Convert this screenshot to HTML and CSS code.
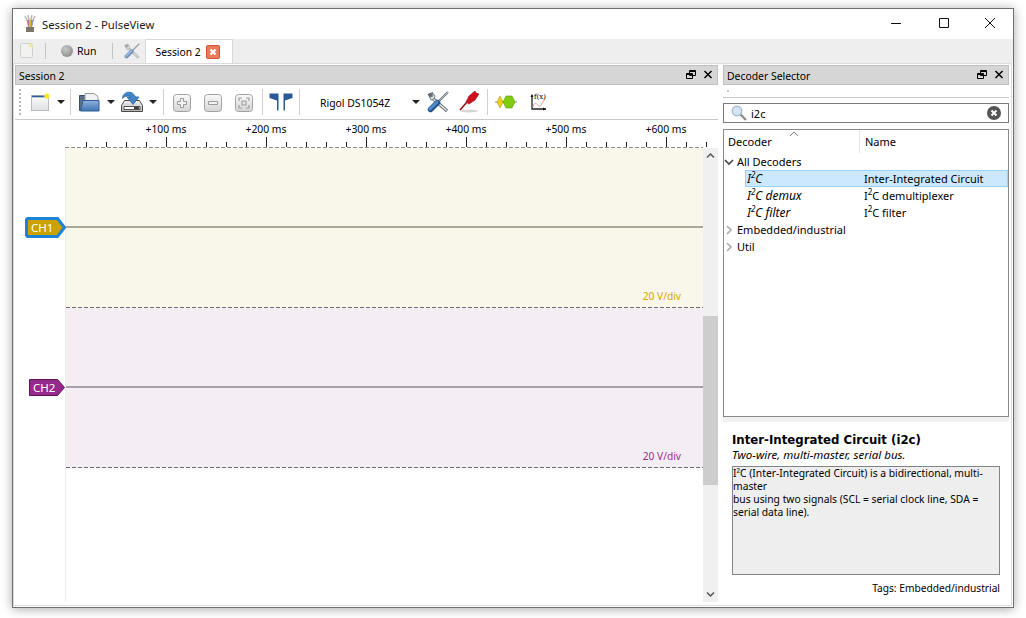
FILE: index.html
```html
<!DOCTYPE html>
<html lang="en">
<head>
  <meta charset="UTF-8" />
  <title>Session 2 - PulseView</title>
  <link rel="stylesheet" href="styles.css">
</head>
<body>
  <div class="window">
    <header class="titlebar">
      <svg class="app-icon" width="16" height="18" viewBox="0 0 16 18">
        <path d="M3 1l3 6M6 0l1.500 7M10 0L8.500 7M13 1l-3 6" stroke="#b9b0a8" stroke-width="1.400" fill="none"/>
        <path d="M4.500 5h7L10 12H6z" fill="#c9789a"/>
        <path d="M7 5h2v7H7z" fill="#e0b040"/>
        <path d="M9 5h2.500L10 12H9z" fill="#7d9ac8"/>
        <path d="M4 12h8v5H4z" fill="#7d7668"/>
      </svg>
      <span class="title-text">Session 2 - PulseView</span>
      <div class="win-buttons">
        <svg width="46" height="30" viewBox="0 0 46 30"><path d="M16 14.500h10" stroke="#111"/></svg>
        <svg width="46" height="30" viewBox="0 0 46 30"><path d="M18.500 9.500h9v9h-9z" fill="none" stroke="#111"/></svg>
        <svg width="46" height="30" viewBox="0 0 46 30"><path d="M18 9l10 10M28 9L18 19" fill="none" stroke="#111"/></svg>
      </div>
    </header>

    <nav class="tabbar">
      <svg class="tb-new" width="14" height="16" viewBox="0 0 14 16">
        <rect x="0.500" y="0.500" width="12" height="14" rx="1" fill="#f2f2f0" stroke="#cfcfcf"/>
        <circle cx="11" cy="2.500" r="2" fill="#f3ea9a"/>
      </svg>
      <span class="tb-sep"></span>
      <span class="run-dot"></span>
      <span class="run-text">Run</span>
      <span class="tb-sep tb-sep-2"></span>
      <svg class="tb-tools" width="16" height="16" viewBox="0 0 22 22">
        <path d="M3 2l1 4 2 1.500L20 20" stroke="#9a9fa3" stroke-width="3.200" fill="none"/>
        <path d="M4 6L19.500 19.500" stroke="#eceff1" stroke-width="1.400"/>
        <path d="M1 3l2 3 3-1-1-4 3 4-1 3-3 1z" fill="#e6e8e9" stroke="#9a9fa3" stroke-width="0.800"/>
        <path d="M21 1l-9 9" stroke="#9aa2a8" stroke-width="2"/>
        <path d="M10.500 11.500l-7 7" stroke="#6b8bb0" stroke-width="5.400" stroke-linecap="round"/>
        <path d="M10 11l-7 7" stroke="#93b6da" stroke-width="3" stroke-linecap="round"/>
      </svg>
      <div class="tab">
        <span>Session 2</span>
        <svg width="14" height="14" viewBox="0 0 14 14">
          <rect x="0.500" y="0.500" width="13" height="13" rx="1" fill="#ea7a58" stroke="#d8502f"/>
          <path d="M4.500 4.500l5 5M9.500 4.500l-5 5" stroke="#fff" stroke-width="2.200"/>
        </svg>
      </div>
    </nav>

    <main class="docks">
      <section class="session-dock">
        <div class="dock-head">
          <span>Session 2</span>
          <svg class="dock-btn" width="28" height="10" viewBox="0 0 28 10">
            <path d="M3.500 0.500h6v5h-6zM3.500 1.500h6M0.500 3.500h6v5h-6zM0.500 4.500h6" fill="#d6d6d6" stroke="#000"/>
            <path d="M18.500 1l7 7M25.500 1l-7 7" stroke="#000" stroke-width="1.500"/>
          </svg>
        </div>

        <div class="toolbar">
          <span class="grip"></span>
          <svg class="ic-new" width="20" height="20" viewBox="0 0 20 20">
            <defs>
              <linearGradient id="paper" x1="0" y1="0" x2="0" y2="1"><stop offset="0" stop-color="#fbfbfb"/><stop offset="1" stop-color="#dfe3e3"/></linearGradient>
              <radialGradient id="glow"><stop offset="0.400" stop-color="#f7e81c"/><stop offset="1" stop-color="#fff7a0" stop-opacity="0"/></radialGradient>
            </defs>
            <rect x="0.500" y="3.500" width="17" height="15" fill="url(#paper)" stroke="#b9bdbd"/>
            <path d="M1 4.500h15" stroke="#2c5c98" stroke-width="1.600"/>
            <circle cx="16" cy="4" r="4" fill="url(#glow)"/>
          </svg>
          <span class="caret c-1"></span>
          <span class="sep s-1"></span>
          <svg class="ic-open" width="21" height="20" viewBox="0 0 21 20">
            <defs>
              <linearGradient id="folder" x1="0" y1="0" x2="0" y2="1"><stop offset="0" stop-color="#8fb2dc"/><stop offset="1" stop-color="#3f74b4"/></linearGradient>
            </defs>
            <path d="M0.500 3.500h7l1 2h3v13h-11z" fill="#5b7088" stroke="#3d4e60"/>
            <path d="M6 1.500h9l4 3v10H6z" fill="#f2f2f2" stroke="#9a9a9a"/>
            <path d="M4 8.500h16v10.500H1.500z" fill="url(#folder)" stroke="#2f5c94"/>
          </svg>
          <span class="caret c-2"></span>
          <svg class="ic-save" width="22" height="22" viewBox="0 0 22 22">
            <defs>
              <linearGradient id="drive" x1="0" y1="0" x2="0" y2="1"><stop offset="0" stop-color="#f2f2f2"/><stop offset="1" stop-color="#b4b4b4"/></linearGradient>
            </defs>
            <path d="M3.500 9.500h15l3 5v6h-21v-6z" fill="url(#drive)" stroke="#4a4a4a"/>
            <path d="M3 15.500h16v3H3z" fill="#fff" stroke="#555"/>
            <path d="M13 16h5v2h-5z" fill="#3f3f3f"/>
            <path d="M1.500 7.500C1.500 1 11-2 14.500 6H18l-6 7.500L6 6h3.500C8 4.500 4 4.500 1.500 7.500z" fill="#3f86c8" stroke="#2a5f98" stroke-width="0.800"/>
          </svg>
          <span class="caret c-3"></span>
          <span class="sep s-2"></span>
          <svg class="ic-zoom z-1" width="18" height="18" viewBox="0 0 18 18">
            <defs>
              <linearGradient id="btn" x1="0" y1="0" x2="0" y2="1"><stop offset="0" stop-color="#fafafa"/><stop offset="1" stop-color="#d4d4d4"/></linearGradient>
            </defs>
            <rect x="0.500" y="0.500" width="17" height="17" rx="3" fill="url(#btn)" stroke="#a2a2a2"/>
            <path d="M7.500 4.500h3v3h3v3h-3v3h-3v-3h-3v-3h3z" fill="#f4f4f4" stroke="#9a9a9a"/>
          </svg>
          <svg class="ic-zoom z-2" width="18" height="18" viewBox="0 0 18 18">
            <rect x="0.500" y="0.500" width="17" height="17" rx="3" fill="url(#btn)" stroke="#a2a2a2"/>
            <path d="M4.500 7.500h9v3h-9z" fill="#f4f4f4" stroke="#9a9a9a"/>
          </svg>
          <svg class="ic-zoom z-2" width="18" height="18" viewBox="0 0 18 18">
            <rect x="0.500" y="0.500" width="17" height="17" rx="3" fill="url(#btn)" stroke="#a2a2a2"/>
            <path d="M4 7V4h3M11 4h3v3M14 11v3h-3M7 14H4v-3M7 7h4v4H7z" fill="none" stroke="#a0a0a0" stroke-width="1.200"/>
          </svg>
          <span class="sep s-3"></span>
          <svg class="ic-cursors" width="24" height="18" viewBox="0 0 24 18">
            <path d="M0.500 0.500h9v17H8V7.500L.5 5z" fill="#2a5a98"/>
            <path d="M23.500 0.500h-9v17H16V7.500L23.500 5z" fill="#2a5a98"/>
          </svg>
          <span class="sep s-4"></span>
          <span class="device">Rigol DS1054Z</span>
          <span class="caret c-4"></span>
          <svg class="ic-tools" width="22" height="22" viewBox="0 0 22 22">
            <path d="M3 2l1 4 2 1.500L20 20" stroke="#5f6a72" stroke-width="3.200" fill="none"/>
            <path d="M4 6L19.500 19.500" stroke="#eceff1" stroke-width="1.400"/>
            <path d="M1 3l2 3 3-1-1-4 3 4-1 3-3 1z" fill="#dfe2e4" stroke="#5f6a72" stroke-width="0.800"/>
            <path d="M21 1l-9 9" stroke="#5b6670" stroke-width="2"/>
            <path d="M21 1l-9 9" stroke="#d9dde0" stroke-width="0.800"/>
            <path d="M10.500 11.500l-7 7" stroke="#1f4f88" stroke-width="5.400" stroke-linecap="round"/>
            <path d="M10 11l-7 7" stroke="#4f8ccb" stroke-width="3" stroke-linecap="round"/>
          </svg>
          <svg class="ic-probe" width="21" height="22" viewBox="0 0 21 22">
            <ellipse cx="10" cy="20" rx="9" ry="1.500" fill="#d6d6d6"/>
            <path d="M1 19L8 11" stroke="#a01010" stroke-width="1.600"/>
            <path d="M7 11l3-6 6-5 1 2 3 1-4 6-6 4z" fill="#d0101c" stroke="#8a0c12" stroke-width="0.600"/>
          </svg>
          <span class="sep s-5"></span>
          <svg class="ic-decoder" width="22" height="14" viewBox="0 0 22 14">
            <path d="M0 7h22" stroke="#888"/>
            <path d="M5 1l3 6-3 6-3-6z" fill="#f0cf20" stroke="#b49a10" stroke-width="0.600"/>
            <path d="M11 1h6l3 6-3 6h-6l-3-6z" fill="#7ecb10" stroke="#5c9a08" stroke-width="0.600"/>
          </svg>
          <svg class="ic-math" width="18" height="19" viewBox="0 0 18 19">
            <path d="M3 2v14h14" fill="none" stroke="#222" stroke-width="1.300"/>
            <path d="M1.500 4L3 1l1.500 3zM14 14.500l3 1.500-3 1.500z" fill="#111"/>
            <path d="M4 14c2-7 4-2 6-1s4-4 6-9" fill="none" stroke="#ee9a9a"/>
            <text class="math-text" x="5" y="6">f(x)</text>
          </svg>
        </div>

        <div class="ruler-row">
          <svg class="ruler" width="692" height="28" viewBox="0 0 692 28">
            <defs>
              <pattern id="ticks" x="21" y="0" width="20" height="28" patternUnits="userSpaceOnUse">
                <path d="M0.500 22v5" stroke="#222"/>
              </pattern>
              <pattern id="majors" x="1" y="0" width="100" height="28" patternUnits="userSpaceOnUse">
                <path d="M0.500 17v10" stroke="#222"/>
              </pattern>
            </defs>
            <rect x="21" width="621" height="28" fill="url(#ticks)"/>
            <rect x="101" width="541" height="28" fill="url(#majors)"/>
            <path d="M0 27.500h638" stroke="#8c8c8c" stroke-dasharray="4 2"/>
            <text class="tick-label" x="101" y="13">+100 ms</text>
            <text class="tick-label" x="201" y="13">+200 ms</text>
            <text class="tick-label" x="301" y="13">+300 ms</text>
            <text class="tick-label" x="401" y="13">+400 ms</text>
            <text class="tick-label" x="501" y="13">+500 ms</text>
            <text class="tick-label" x="601" y="13">+600 ms</text>
          </svg>
        </div>

        <div class="trace-area">
          <div class="traces">
            <div class="trace">
              <div class="gutter">
                <svg width="41" height="21" viewBox="0 0 41 21">
                  <path d="M2.500 1.500h30l7 9-7 9h-30l-1-1v-16z" fill="#c9a200" stroke="#1c84d8" stroke-width="3"/>
                  <text class="ch-label" x="6" y="14.500">CH1</text>
                </svg>
              </div>
              <div class="band band-1">
                <span class="sig-line"></span>
                <span class="vdiv">20 V/div</span>
              </div>
            </div>
            <div class="trace">
              <div class="gutter">
                <svg width="37" height="17" viewBox="0 0 37 17">
                  <path d="M0.500 0.500h28l7 8-7 8h-28z" fill="#952a8c" stroke="#5e1258"/>
                  <text class="ch-label" x="4" y="12.500">CH2</text>
                </svg>
              </div>
              <div class="band band-2">
                <span class="sig-line"></span>
                <span class="vdiv">20 V/div</span>
              </div>
            </div>
            <div class="trace-rest"><div class="gutter"></div></div>
          </div>
          <div class="scrollbar">
            <svg width="15" height="16" viewBox="0 0 15 16"><path d="M4 9.500l3.500-3.500 3.500 3.500" fill="none" stroke="#555" stroke-width="1.500"/></svg>
            <div class="scroll-track"><div class="scroll-thumb"></div></div>
            <svg width="15" height="16" viewBox="0 0 15 16"><path d="M4 6.500L7.500 10 11 6.500" fill="none" stroke="#555" stroke-width="1.500"/></svg>
          </div>
        </div>
      </section>

      <aside class="decoder-dock">
        <div class="dock-head">
          <span>Decoder Selector</span>
          <svg class="dock-btn" width="28" height="10" viewBox="0 0 28 10">
            <path d="M3.500 0.500h6v5h-6zM3.500 1.500h6M0.500 3.500h6v5h-6zM0.500 4.500h6" fill="#d6d6d6" stroke="#000"/>
            <path d="M18.500 1l7 7M25.500 1l-7 7" stroke="#000" stroke-width="1.500"/>
          </svg>
        </div>
        <div class="search-strip"><span class="strip-dot"></span></div>
        <div class="search">
          <svg width="16" height="16" viewBox="0 0 16 16">
            <path d="M9 9l6 6" stroke="#8a8a8a" stroke-width="2.200"/>
            <circle cx="6" cy="6" r="4.800" fill="#d4e6f6" stroke="#a4b8ca" stroke-width="1.300"/>
          </svg>
          <span class="search-text">i2c</span>
          <svg class="search-clear" width="14" height="14" viewBox="0 0 14 14">
            <circle cx="7" cy="7" r="7" fill="#555"/>
            <path d="M4.500 4.500l5 5M9.500 4.500l-5 5" stroke="#fff" stroke-width="2"/>
          </svg>
        </div>

        <div class="tree">
          <div class="tree-head">
            <span class="th-name">Decoder</span>
            <span class="th-desc">Name</span>
            <svg class="sort" width="10" height="5" viewBox="0 0 10 5"><path d="M1 5l4-4 4 4" fill="none" stroke="#888"/></svg>
          </div>
          <div class="row">
            <svg class="arrow" width="10" height="10" viewBox="0 0 10 10"><path d="M1 3l4 4 4-4" fill="none" stroke="#444" stroke-width="1.600"/></svg>
            <span>All Decoders</span>
          </div>
          <div class="row child selected">
            <span class="cell-name"><i>I<sup>2</sup>C</i></span>
            <span>Inter-Integrated Circuit</span>
          </div>
          <div class="row child">
            <span class="cell-name"><i>I<sup>2</sup>C demux</i></span>
            <span>I<sup>2</sup>C demultiplexer</span>
          </div>
          <div class="row child">
            <span class="cell-name"><i>I<sup>2</sup>C filter</i></span>
            <span>I<sup>2</sup>C filter</span>
          </div>
          <div class="row">
            <svg class="arrow" width="10" height="10" viewBox="0 0 10 10"><path d="M3 1l4 4-4 4" fill="none" stroke="#aaa" stroke-width="1.600"/></svg>
            <span>Embedded/industrial</span>
          </div>
          <div class="row">
            <svg class="arrow" width="10" height="10" viewBox="0 0 10 10"><path d="M3 1l4 4-4 4" fill="none" stroke="#aaa" stroke-width="1.600"/></svg>
            <span>Util</span>
          </div>
        </div>

        <div class="splitter"></div>
        <div class="details">
          <h2>Inter-Integrated Circuit (i2c)</h2>
          <p class="brief">Two-wire, multi-master, serial bus.</p>
          <p class="desc">I²C (Inter-Integrated Circuit) is a bidirectional, multi-master<br>bus using two signals (SCL = serial clock line, SDA = serial data line).</p>
          <p class="tags">Tags: Embedded/industrial</p>
        </div>
      </aside>
    </main>
  </div>
</body>
</html>
```

FILE: styles.css
```css
* {
  margin: 0;
  padding: 0;
  box-sizing: border-box;
}

html, body {
  height: 100%;
  overflow: hidden;
}

body {
  background: #fff;
  padding: 8px 12px 10px;
  font-family: "Noto Sans", "Open Sans", sans-serif;
  font-size: 11px;
  color: #000;
}

.window {
  width: 1002px;
  height: 600px;
  background: #fff;
  border: 1px solid #6f6f6f;
  box-shadow: 0 1px 10px rgba(0, 0, 0, 0.35);
  display: flex;
  flex-direction: column;
}

.titlebar {
  height: 30px;
  display: flex;
  align-items: center;
  padding-left: 9px;
}

.app-icon {
  margin-right: 4px;
}

.title-text {
  font-size: 11.300px;
  color: #1a1a1a;
}

.win-buttons {
  margin-left: auto;
  display: flex;
}

.tabbar {
  height: 24px;
  background: #eeeeee;
  display: flex;
  align-items: center;
  padding-left: 7px;
}

.tb-sep {
  width: 1px;
  height: 16px;
  background: #c4c4c4;
  margin-left: 11px;
}

.tb-sep-2 {
  margin-left: 15px;
}

.run-dot {
  width: 12px;
  height: 12px;
  border-radius: 50%;
  background: radial-gradient(circle at 40% 35%, #c8c8c8, #7e7e7e);
  margin-left: 15px;
}

.run-text {
  margin-left: 4px;
  font-size: 10.500px;
}

.tb-tools {
  margin-left: 11px;
}

.tab {
  align-self: stretch;
  margin-left: 5px;
  width: 88px;
  background: #fff;
  border: 1px solid #d8d8d8;
  border-bottom: none;
  display: flex;
  align-items: center;
  gap: 4px;
  padding-left: 10px;
  font-size: 10.300px;
}

.tab svg {
  margin-left: 1px;
}

.docks {
  flex: 1;
  display: flex;
  min-height: 0;
  margin: 0 1px 1px 0;
  padding: 1px 0 3px 1px;
  border: 1px solid #dcdcdc;
}

.session-dock {
  width: 703px;
  display: flex;
  flex-direction: column;
}

.decoder-dock {
  width: 286px;
  margin-left: 5px;
  display: flex;
  flex-direction: column;
}

.dock-head {
  height: 20px;
  flex-shrink: 0;
  background: #d6d6d6;
  border: 1px solid #c0c0c0;
  display: flex;
  align-items: center;
  justify-content: space-between;
  padding: 2px 3px 0;
  font-size: 10.400px;
}

.dock-btn {
  margin-top: -2px;
}

.toolbar {
  height: 35px;
  flex-shrink: 0;
  display: flex;
  align-items: center;
  border-bottom: 1px solid #c8c8c8;
}

.grip {
  width: 2px;
  height: 26px;
  margin-left: 4px;
  background: repeating-linear-gradient(#b8b8b8 0 2px, transparent 2px 4px);
}

.sep {
  width: 1px;
  height: 26px;
  background: #d0d0d0;
}

.caret {
  width: 0;
  height: 0;
  border-left: 4px solid transparent;
  border-right: 4px solid transparent;
  border-top: 4px solid #222;
}

.ic-new { margin-left: 10px; }
.c-1 { margin-left: 6px; }
.s-1 { margin-left: 5px; }
.ic-open { margin-left: 8px; }
.c-2 { margin-left: 7px; }
.ic-save { margin-left: 6px; }
.c-3 { margin-left: 6px; }
.s-2 { margin-left: 6px; }
.z-1 { margin: 1px 0 0 9px; }
.z-2 { margin: 1px 0 0 13px; }
.s-3 { margin-left: 9px; }
.ic-cursors { margin-left: 6px; }
.s-4 { margin-left: 6px; }
.device { margin: 1px 0 0 20px; width: 92px; font-size: 10.400px; }
.ic-tools { margin-left: 7px; }
.ic-probe { margin-left: 10px; }
.s-5 { margin-left: 7px; }
.ic-decoder { margin-left: 7px; }
.ic-math { margin-left: 12px; }

.math-text {
  font-size: 7px;
  font-family: "DejaVu Serif", serif;
}

.ruler-row {
  height: 28px;
  flex-shrink: 0;
  padding-left: 50px;
}

.ruler {
  display: block;
}

.tick-label {
  font-size: 10.300px;
  fill: #000;
  text-anchor: middle;
}

.ch-label {
  font-size: 11.500px;
  fill: #fff;
}

.trace-area {
  flex: 1;
  min-height: 0;
  display: flex;
}

.traces {
  flex: 1;
  display: flex;
  flex-direction: column;
}

.trace {
  height: 160px;
  display: flex;
}

.trace-rest {
  flex: 1;
  display: flex;
}

.gutter {
  width: 51px;
  flex-shrink: 0;
  border-right: 1px solid #ececec;
  display: flex;
  align-items: center;
  justify-content: flex-end;
}

.trace .gutter svg {
  margin: 0 -1px 2px 0;
}

.band {
  flex: 1;
  display: grid;
  grid-template-rows: 78px 2px 1fr;
  padding-bottom: 1px;
  background-repeat: no-repeat;
  background-position: bottom;
  background-size: 100% 1px;
  background-image: repeating-linear-gradient(90deg, #6e6e6e 0 4px, transparent 4px 6px);
}

.band-1 { background-color: #f9f7ea; }
.band-2 { background-color: #f4eef4; }

.sig-line {
  grid-row: 2;
}

.band-1 .sig-line { background: #aaa797; }
.band-2 .sig-line { background: #ab9fab; }

.vdiv {
  grid-row: 3;
  align-self: end;
  justify-self: end;
  margin: 0 22px 4px 0;
  font-size: 10.200px;
}

.band-1 .vdiv { color: #d2a800; }
.band-2 .vdiv { color: #9a2a92; }

.scrollbar {
  width: 15px;
  flex-shrink: 0;
  background: #f0f0f0;
  display: flex;
  flex-direction: column;
}

.scroll-track {
  flex: 1;
  padding-top: 152px;
}

.scroll-thumb {
  height: 169px;
  background: #cdcdcd;
}

.search-strip {
  height: 13px;
  flex-shrink: 0;
  border-bottom: 1px solid #c8c8c8;
  padding: 5px 0 0 4px;
}

.strip-dot {
  display: block;
  width: 2px;
  height: 2px;
  background: #c4c4c4;
}

.search {
  height: 20px;
  flex-shrink: 0;
  margin-top: 5px;
  border: 1px solid #7a7a7a;
  display: flex;
  align-items: center;
  padding: 0 7px;
  gap: 4px;
}

.search-clear {
  margin-left: auto;
}

.tree {
  height: 288px;
  flex-shrink: 0;
  margin-top: 6px;
  border: 1px solid #868a8e;
  position: relative;
}

.tree-head {
  height: 23px;
  display: flex;
  align-items: center;
  padding-left: 4px;
}

.th-name {
  width: 132px;
  border-right: 1px solid #e5e5e5;
  height: 23px;
  line-height: 23px;
}

.th-desc {
  padding-left: 5px;
}

.sort {
  position: absolute;
  left: 65px;
  top: 1px;
}

.row {
  height: 17px;
  display: flex;
  align-items: center;
}

.row .arrow {
  margin-right: 3px;
}

.row.child {
  margin-left: 21px;
  padding-left: 2px;
}

.row.selected {
  background: #cce8ff;
  border: 1px solid #99d1ff;
  padding-left: 1px;
}

.cell-name {
  width: 117px;
  flex-shrink: 0;
  font-size: 12px;
}

sup {
  font-size: 8px;
  line-height: 0;
}

.splitter {
  height: 5px;
  flex-shrink: 0;
  background: #f0f0f0;
}

.details {
  flex: 1;
  padding: 10px 9px 0;
  display: flex;
  flex-direction: column;
}

.details h2 {
  font-size: 11.750px;
  font-family: "DejaVu Sans", sans-serif;
  font-weight: bold;
  line-height: 16px;
}

.brief {
  font-style: italic;
  font-size: 11.500px;
  line-height: 13px;
}

.desc {
  height: 109px;
  margin-top: 5px;
  background: #eeeeee;
  border: 1px solid #808488;
  font-size: 10.300px;
  line-height: 13px;
}

.tags {
  margin-top: 6px;
  text-align: right;
  font-size: 10.200px;
}
```
